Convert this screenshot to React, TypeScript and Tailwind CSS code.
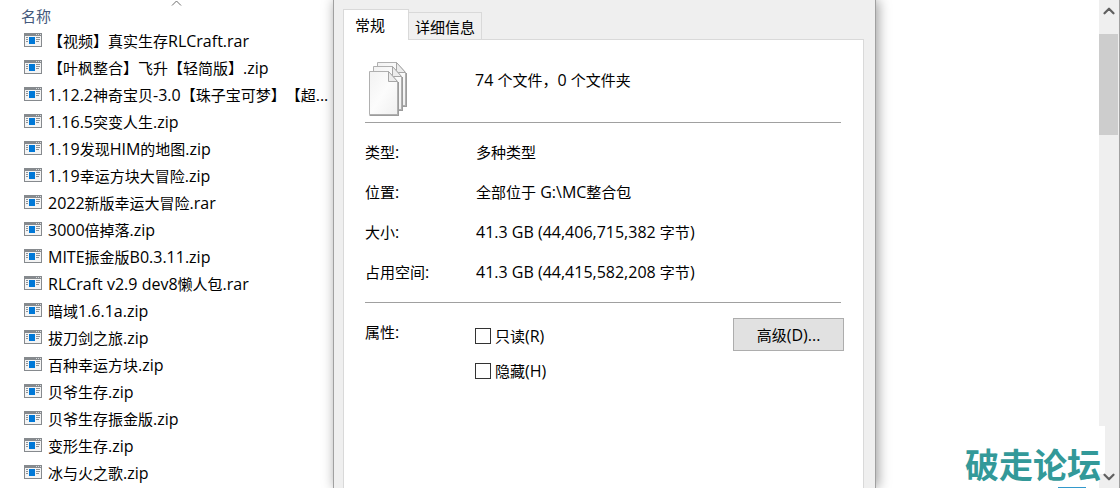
import { ChevronDown, ChevronUp } from "lucide-react";

const FILES = [
  "【视频】真实生存RLCraft.rar",
  "【叶枫整合】飞升【轻简版】.zip",
  "1.12.2神奇宝贝-3.0【珠子宝可梦】【超...",
  "1.16.5突变人生.zip",
  "1.19发现HIM的地图.zip",
  "1.19幸运方块大冒险.zip",
  "2022新版幸运大冒险.rar",
  "3000倍掉落.zip",
  "MITE振金版B0.3.11.zip",
  "RLCraft v2.9 dev8懒人包.rar",
  "暗域1.6.1a.zip",
  "拔刀剑之旅.zip",
  "百种幸运方块.zip",
  "贝爷生存.zip",
  "贝爷生存振金版.zip",
  "变形生存.zip",
  "冰与火之歌.zip",
];

const DETAILS = [
  { label: "类型:", value: "多种类型" },
  { label: "位置:", value: "全部位于 G:\\MC整合包" },
  { label: "大小:", value: "41.3 GB (44,406,715,382 字节)" },
  { label: "占用空间:", value: "41.3 GB (44,415,582,208 字节)" },
];

// Latin runs look small next to the Chinese glyphs, so they get their own size.
function Mixed({ text }: { text: string }) {
  return (
    <>
      {text.split(/([\x20-\x7e]+)/).map((part, index) =>
        index % 2 === 1 ? (
          <span key={index} className="text-[16px] leading-5">
            {part}
          </span>
        ) : (
          part
        ),
      )}
    </>
  );
}

function ArchiveIcon() {
  return (
    <svg
      width="18"
      height="14"
      viewBox="0 0 18 14"
      shapeRendering="crispEdges"
      className="mt-[6px] shrink-0 self-start"
    >
      <rect width="18" height="14" fill="#868a8e" />
      <rect x="1" y="3" width="16" height="10" fill="#f4f4f4" />
      <path d="M12 1h1v1h-1zM14 1h1v1h-1zM16 1h1v1h-1z" fill="#d8dadc" />
      <rect x="5" y="4" width="6" height="7" fill="#0078d7" />
      <path d="M2 4h2v1H2zM2 6h2v1H2zM2 8h2v1H2zM12 4h4v1h-4zM12 6h4v1h-4zM12 8h3v1h-3z" fill="#8e9296" />
    </svg>
  );
}

function FilesIcon() {
  return (
    <svg width="40" height="56" viewBox="0 0 40 56">
      <defs>
        <linearGradient id="sheet" x1="0" y1="0" x2="1" y2="1">
          <stop offset="0" stopColor="#f2f2f2" />
          <stop offset="0.5" stopColor="#fcfcfc" />
          <stop offset="1" stopColor="#f0f0f0" />
        </linearGradient>
      </defs>
      {[
        [8, 1],
        [4, 5],
        [0, 10],
      ].map(([x, y]) => (
        <g key={x} transform={`translate(${x} ${y})`}>
          <path d="M1.500 44H30V11" fill="none" stroke="#9c9c9c" strokeWidth="2" />
          <path d="M1.500.500H20.500L29.500 10.500V43.500H1.500Z" fill="url(#sheet)" stroke="#b0b0b0" />
          <path d="M20.500.500V10.500H29.500Z" fill="#ececec" stroke="#a6a6a6" />
        </g>
      ))}
    </svg>
  );
}

function FileList() {
  return (
    <section className="w-[333px] shrink-0">
      <header className="relative flex h-[27px] items-center pl-[21px] pt-1 text-[#44597c]">
        名称
        <svg width="11" height="6" viewBox="0 0 11 6" className="absolute left-[171px] top-0">
          <path d="M1 5.500 5.500 1 10 5.500" fill="none" stroke="#6d6d6d" />
        </svg>
      </header>
      <ul>
        {FILES.map((name) => (
          <li key={name} className="flex h-[27px] items-center gap-[6px] whitespace-nowrap pl-6">
            <ArchiveIcon />
            <span>
              <Mixed text={name} />
            </span>
          </li>
        ))}
      </ul>
    </section>
  );
}

function Attribute({ id, label }: { id: string; label: string }) {
  return (
    <div className="flex h-[35px] items-center gap-1">
      <input
        id={id}
        type="checkbox"
        className="h-4 w-4 appearance-none border border-[#333333] bg-white checked:bg-[#0078d7]"
      />
      <label htmlFor={id}>
        <Mixed text={label} />
      </label>
    </div>
  );
}

function PropertiesDialog() {
  return (
    <section className="z-10 flex w-[543px] shrink-0 flex-col border-x border-[#a0a0a0] bg-[#efefef] pl-[9px] pr-[11px] pt-[9px] shadow-[2px_0_12px_rgba(0,0,0,0.4)]">
      <div role="tablist" className="flex items-end">
        <button
          role="tab"
          aria-selected="true"
          className="z-10 -mb-px h-[31px] w-[66px] border border-b-0 border-[#d9d9d9] bg-white pr-3"
        >
          常规
        </button>
        <button
          role="tab"
          aria-selected="false"
          className="h-[27px] w-[73px] whitespace-nowrap border border-b-0 border-l-0 border-[#d9d9d9] bg-[#f0f0f0] pt-[2px]"
        >
          详细信息
        </button>
      </div>
      <div role="tabpanel" className="flex-1 border border-b-0 border-[#d9d9d9] bg-white pl-[21px] pr-[22px]">
        <div className="flex h-[83px] items-center border-b border-[#a0a0a0]">
          <div className="w-[110px] pl-[3px] pt-4">
            <FilesIcon />
          </div>
          <span className="pb-[2px]">
            <Mixed text="74 个文件，0 个文件夹" />
          </span>
        </div>
        <dl className="border-b border-[#a0a0a0] pb-[10px] pt-[9px]">
          {DETAILS.map(({ label, value }) => (
            <div key={label} className="flex h-10 items-center">
              <dt className="w-[111px]">
                <Mixed text={label} />
              </dt>
              <dd>
                <Mixed text={value} />
              </dd>
            </div>
          ))}
        </dl>
        <div className="flex items-start pt-[15px]">
          <span className="w-[110px] pt-1">
            <Mixed text="属性:" />
          </span>
          <div className="flex-1">
            <Attribute id="readonly" label="只读(R)" />
            <Attribute id="hidden" label="隐藏(H)" />
          </div>
          <button className="-mr-[3px] h-[33px] w-[111px] border border-[#adadad] bg-[#e1e1e1]">
            <Mixed text="高级(D)..." />
          </button>
        </div>
      </div>
    </section>
  );
}

function ScrollTrack() {
  return (
    <div className="flex w-[21px] flex-col border-r border-[#a0a0a0] bg-[#efefef] pr-px">
      <button aria-label="向上滚动" className="flex h-[34px] items-start justify-center pt-[2px] text-[#606060]">
        <ChevronUp size={18} strokeWidth={3} />
      </button>
      <div className="h-[101px] bg-[#cdcdcd]" />
      <button aria-label="向下滚动" className="z-30 mt-auto flex h-5 items-start justify-center text-[#606060]">
        <ChevronDown size={18} strokeWidth={3} />
      </button>
    </div>
  );
}

export default function App() {
  return (
    <main className="relative flex h-screen overflow-hidden bg-white font-['Open_Sans','Noto_Sans_CJK_SC',sans-serif] text-[15px] leading-5 text-black [text-spacing-trim:space-all]">
      <FileList />
      <PropertiesDialog />
      <div className="flex-1" />
      <ScrollTrack />
      {/* Forum watermark */}
      <div className="absolute bottom-[14px] right-[15px] z-20 h-12 w-36 bg-white pl-1 pt-[18px]">
        <span className="block whitespace-nowrap font-['Noto_Sans_CJK_SC',sans-serif] text-[34px] font-bold leading-10 text-[#339999]">
          破走论坛
        </span>
      </div>
      <div className="absolute bottom-0 right-[34px] h-px w-7 bg-[#3399cc]" />
    </main>
  );
}
